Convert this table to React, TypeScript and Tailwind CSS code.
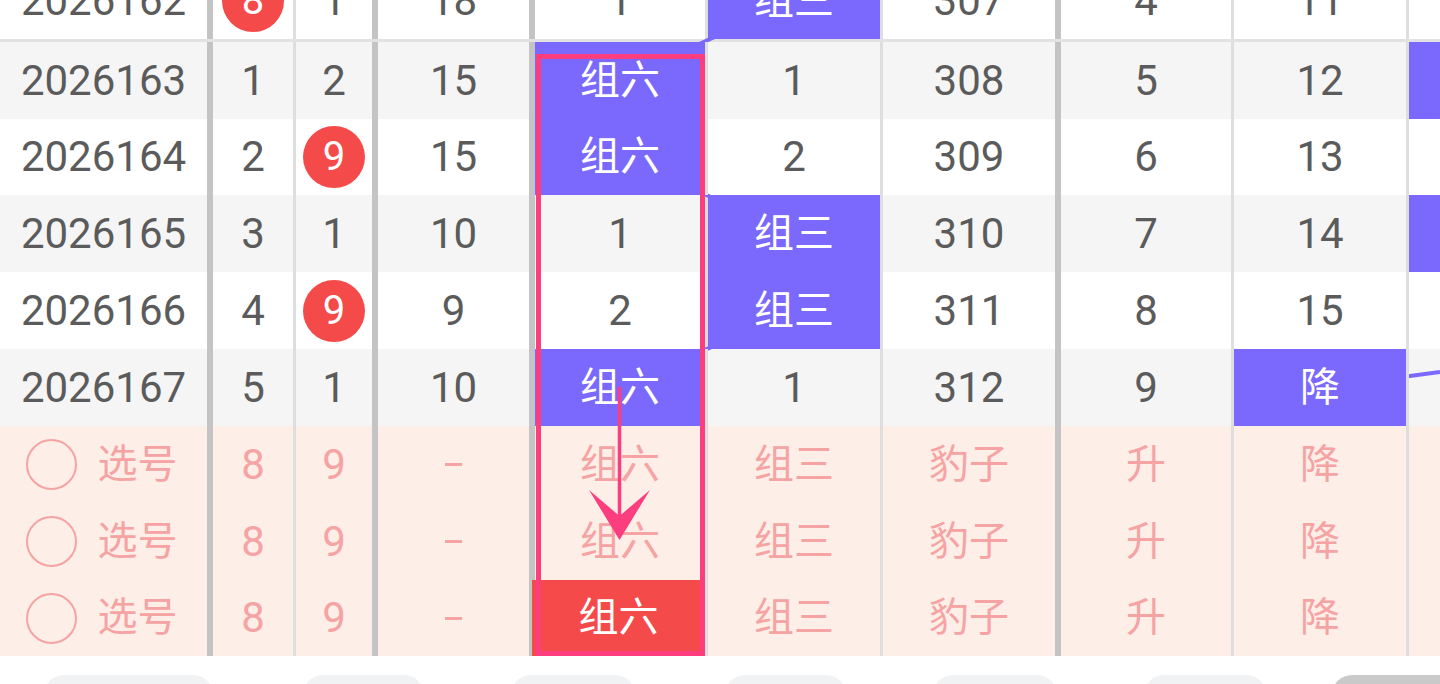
import React from "react";

type Cell =
  | string
  | { v: string; kind: "purple" | "redball" | "redcell" | "plain" };

const COLS = [
  "w-[213px] border-r-[6px] border-[#c4c4c4]",
  "w-[83px] border-r-[3px] border-[#dedede]",
  "w-[82px] border-r-[6px] border-[#c4c4c4]",
  "w-[157px] border-r-[6px] border-[#c4c4c4]",
  "w-[173px] border-r-[3px] border-[#dedede]",
  "w-[175px] border-r-[3px] border-[#dedede]",
  "w-[178px] border-r-[6px] border-[#c4c4c4]",
  "w-[173px] border-r-[3px] border-[#dedede]",
  "w-[175px] border-r-[3px] border-[#dedede]",
  "w-[200px]",
];

const P = (v: string): Cell => ({ v, kind: "purple" });
const R = (v: string): Cell => ({ v, kind: "redball" });

const rows: { cells: Cell[]; bg: string; h: string }[] = [
  {
    cells: ["2026162", R("8"), "1", "18", "1", P("组三"), "307", "4", "11", ""],
    bg: "bg-white",
    h: "h-[80px] border-b-[3px] border-[#e2e2e2]",
  },
  {
    cells: ["2026163", "1", "2", "15", P("组六"), "1", "308", "5", "12", P("")],
    bg: "bg-[#f5f5f5]",
    h: "h-[77px]",
  },
  {
    cells: ["2026164", "2", R("9"), "15", P("组六"), "2", "309", "6", "13", ""],
    bg: "bg-white",
    h: "h-[76px]",
  },
  {
    cells: ["2026165", "3", "1", "10", "1", P("组三"), "310", "7", "14", P("")],
    bg: "bg-[#f5f5f5]",
    h: "h-[77px]",
  },
  {
    cells: ["2026166", "4", R("9"), "9", "2", P("组三"), "311", "8", "15", ""],
    bg: "bg-white",
    h: "h-[77px]",
  },
  {
    cells: ["2026167", "5", "1", "10", P("组六"), "1", "312", "9", P("降"), ""],
    bg: "bg-[#f5f5f5]",
    h: "h-[77px]",
  },
];

function CellView({ c, col }: { c: Cell; col: number }) {
  const base = `${COLS[col]} h-full shrink-0 flex items-center justify-center leading-none`;
  if (typeof c === "string") {
    const cjk = /[\u4e00-\u9fff]/.test(c);
    return (
      <div className={`${base} ${cjk ? "text-[40px]" : "text-[42px]"} text-[#5b5b5b]`}>
        {c}
      </div>
    );
  }
  if (c.kind === "purple") {
    return (
      <div className={`${base} relative z-20 bg-[#7b69fd] text-white text-[40px]`}>
        {c.v}
      </div>
    );
  }
  if (c.kind === "redball") {
    return (
      <div className={base}>
        <div className="w-[62px] h-[62px] rounded-full bg-[#f44a4a] text-white text-[40px] flex items-center justify-center leading-none">
          {c.v}
        </div>
      </div>
    );
  }
  return <div className={base}>{c.v}</div>;
}

function PinkRow({ last, h }: { last: boolean; h: string }) {
  const pink = "text-[#f5a3a3] text-[40px]";
  const base = "h-full shrink-0 flex items-center justify-center leading-none";
  return (
    <div className={`flex ${h} bg-[#fdeee8]`}>
      <div className={`${COLS[0]} ${base} gap-[21px] pr-[4px]`}>
        <div className="w-[51px] h-[51px] rounded-full border-[2.5px] border-[#f5a3a3]" />
        <span className={pink}>选号</span>
      </div>
      <div className={`${COLS[1]} ${base} text-[#f5a3a3] text-[42px]`}>8</div>
      <div className={`${COLS[2]} ${base} text-[#f5a3a3] text-[42px]`}>9</div>
      <div className={`${COLS[3]} ${base}`}>
        <span className="sr-only">-</span>
        <div className="w-[17px] h-[3px] bg-[#f5a3a3]" />
      </div>
      {last ? (
        <div className={`${COLS[4]} ${base} relative z-20 -ml-[3px] w-[176px] bg-[#f54a4a] text-white text-[40px]`}>
          组六
        </div>
      ) : (
        <div className={`${COLS[4]} ${base} ${pink}`}>组六</div>
      )}
      <div className={`${COLS[5]} ${base} ${pink}`}>组三</div>
      <div className={`${COLS[6]} ${base} ${pink}`}>豹子</div>
      <div className={`${COLS[7]} ${base} ${pink}`}>升</div>
      <div className={`${COLS[8]} ${base} ${pink}`}>降</div>
      <div className={`${COLS[9]} ${base}`} />
    </div>
  );
}

export default function App() {
  return (
    <div
      className="relative w-[1440px] h-[684px] overflow-hidden bg-white"
      style={{ fontFamily: "Roboto, 'Noto Sans CJK SC', 'Noto Sans', sans-serif" }}
    >
      <div className="-mt-[38px] flex flex-col">
        {rows.map((r, i) => (
          <div key={i} className={`flex ${r.h} ${r.bg}`}>
            {r.cells.map((c, j) => (
              <CellView key={j} c={c} col={j} />
            ))}
          </div>
        ))}
        <PinkRow last={false} h="h-[77px]" />
        <PinkRow last={false} h="h-[77px]" />
        <PinkRow last={true} h="h-[76px]" />
        <div className="flex mt-[19px] h-[40px]">
          <div className="shrink-0 ml-[44px] w-[169px] h-[40px] rounded-full bg-[#f1f2f4]" />
          <div className="shrink-0 ml-[90px] w-[121px] h-[40px] rounded-full bg-[#f1f2f4]" />
          <div className="shrink-0 ml-[87px] w-[124px] h-[40px] rounded-full bg-[#f1f2f4]" />
          <div className="shrink-0 ml-[90px] w-[121px] h-[40px] rounded-full bg-[#f1f2f4]" />
          <div className="shrink-0 ml-[87px] w-[124px] h-[40px] rounded-full bg-[#f1f2f4]" />
          <div className="shrink-0 ml-[87px] w-[122px] h-[40px] rounded-full bg-[#f1f2f4]" />
          <div className="shrink-0 ml-[66px] w-[170px] h-[40px] rounded-full bg-[#c9c9c9]" />
        </div>
      </div>

      {/* trend lines (under purple cells) */}
      <svg
        className="absolute left-0 top-0 z-10 pointer-events-none"
        width="1440"
        height="684"
        viewBox="0 0 1440 684"
      >
        <g stroke="#7b69fd" strokeWidth="4" fill="none">
          <line x1="794" y1="0.5" x2="620" y2="80.5" />
          <line x1="620" y1="157" x2="794" y2="233.5" />
          <line x1="794" y1="310.5" x2="620" y2="387.5" />
          <line x1="1320" y1="388" x2="1440" y2="372" />
        </g>
      </svg>

      {/* highlight box and arrow */}
      <svg
        className="absolute left-0 top-0 z-30 pointer-events-none"
        width="1440"
        height="684"
        viewBox="0 0 1440 684"
      >
        <rect
          x="538.5"
          y="56.5"
          width="164"
          height="597"
          fill="none"
          stroke="#fc3e7e"
          strokeWidth="5"
        />
        <line x1="619.5" y1="387" x2="619.5" y2="522" stroke="#fc3e7e" strokeWidth="3.5" />
        <path d="M589 490 L619.5 540 L650 490 L619.5 516 Z" fill="#fc3e7e" />
      </svg>
    </div>
  );
}
